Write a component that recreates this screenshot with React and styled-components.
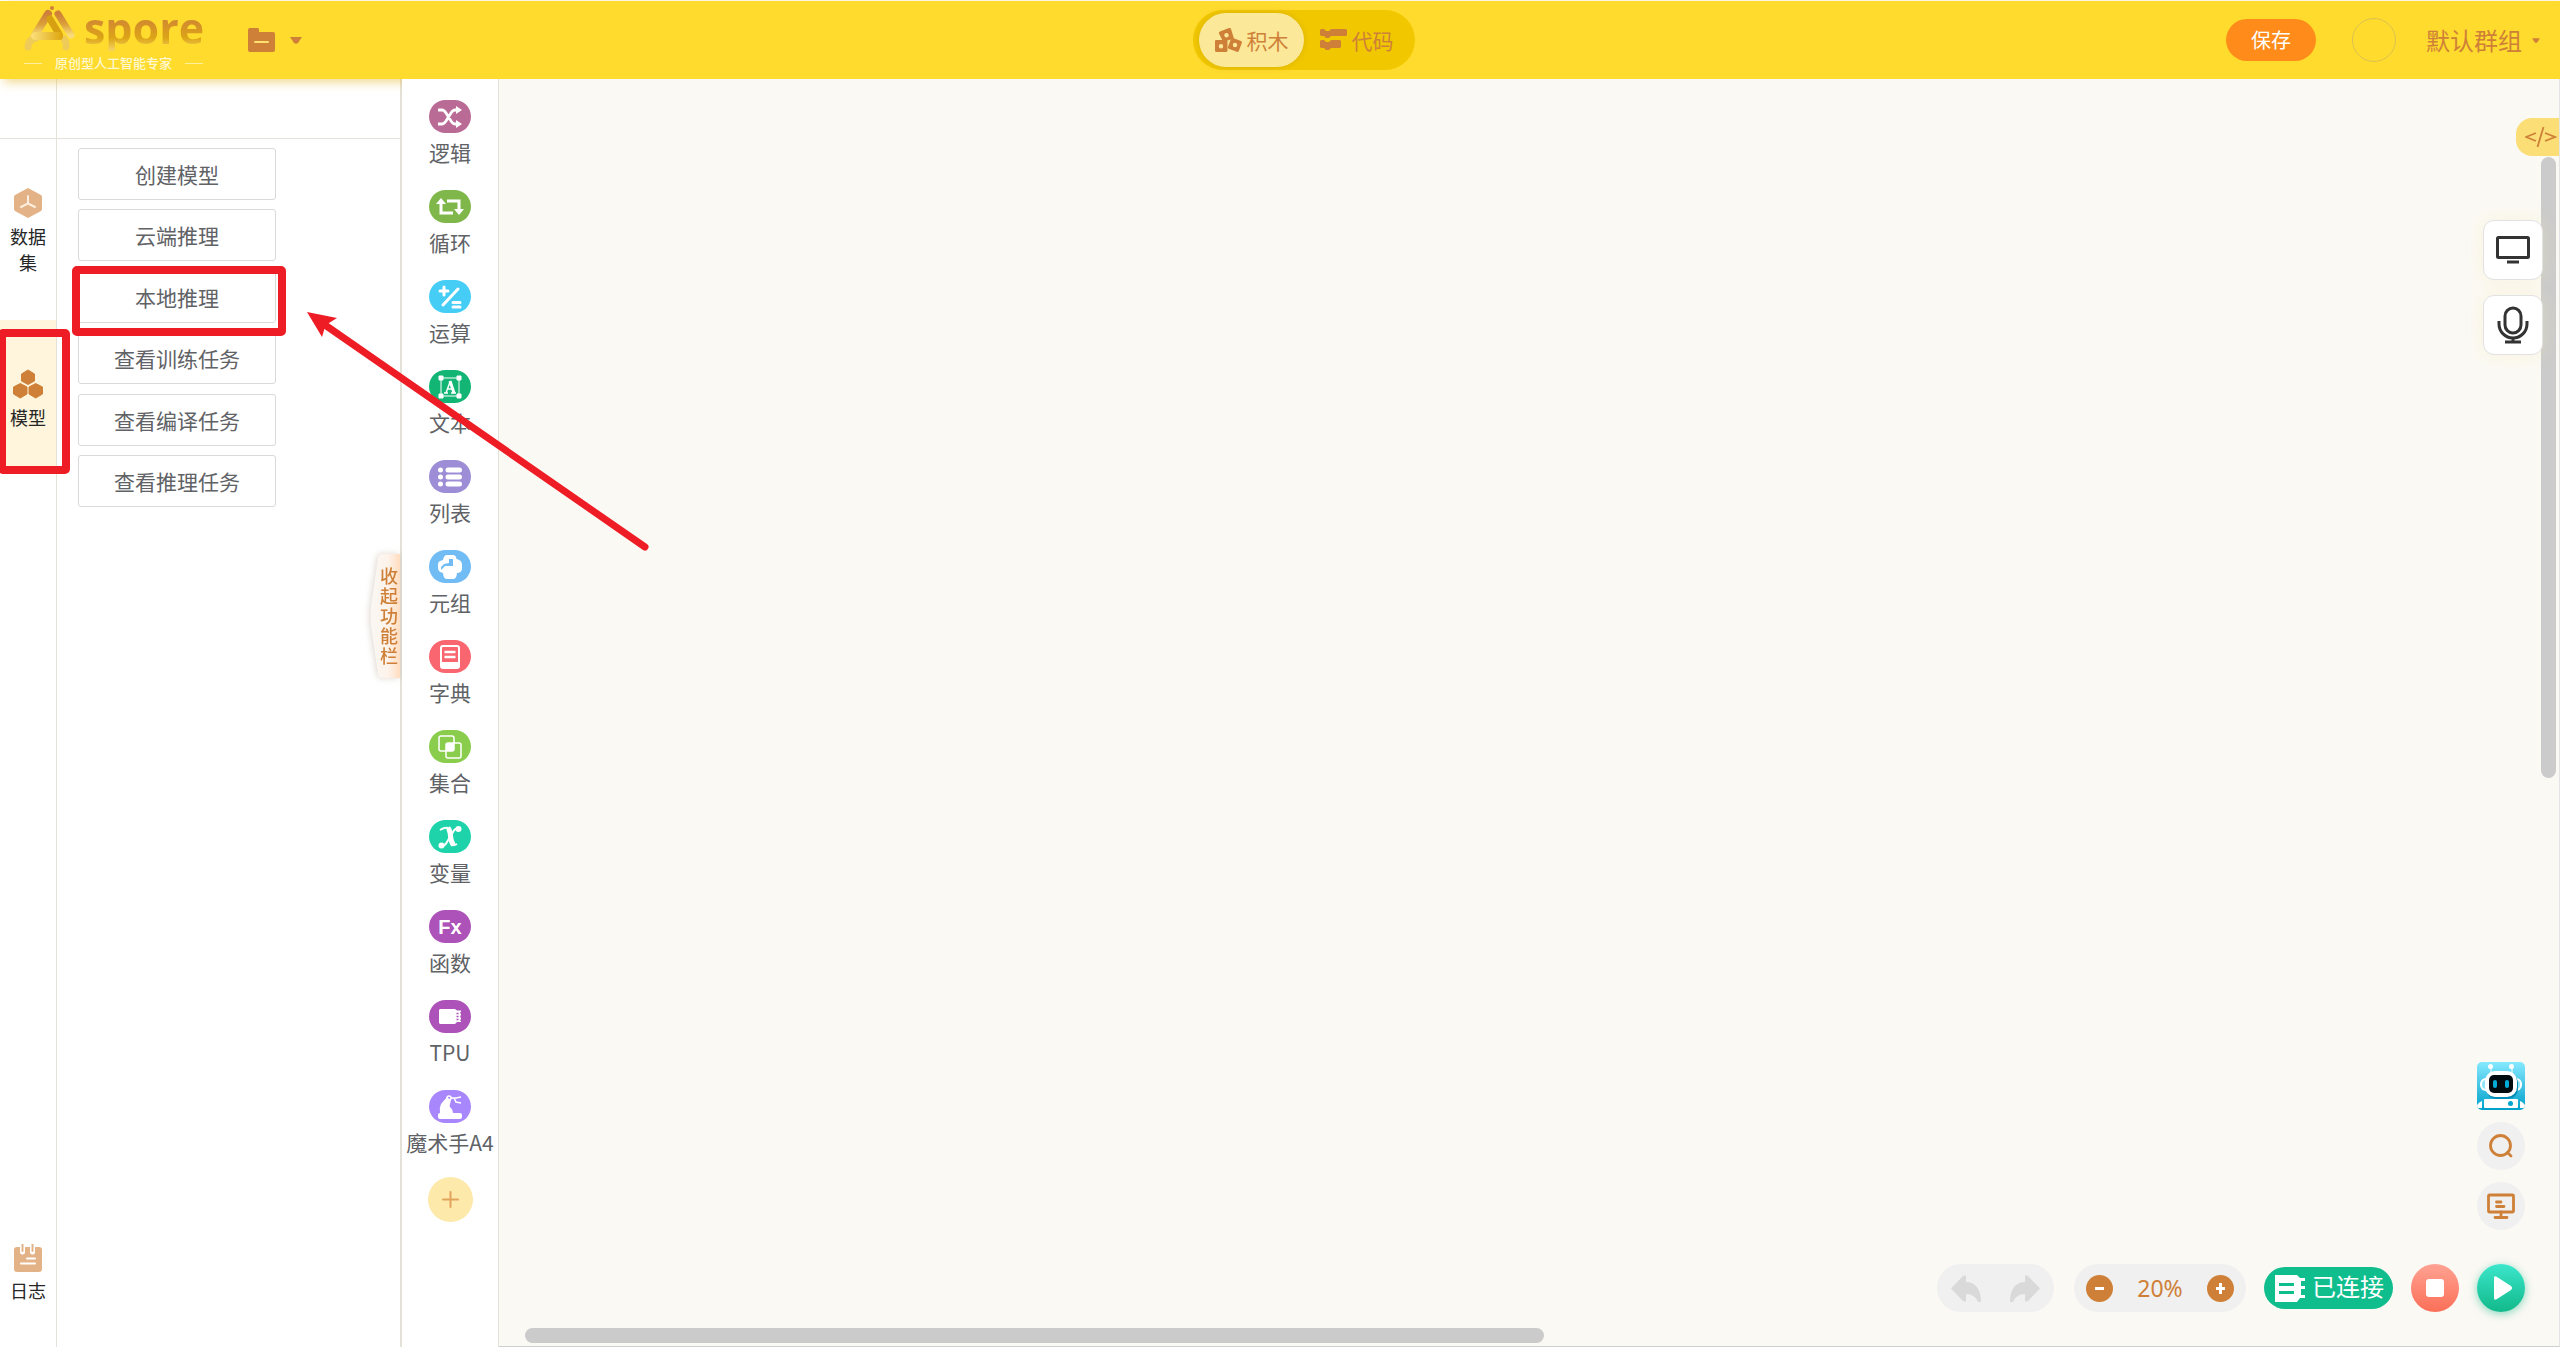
import React from 'react';
import styled, { createGlobalStyle } from 'styled-components';

const brown = '#cf8038';
const line = '#e4e1d8';

const GlobalStyle = createGlobalStyle`
  *, *::before, *::after { box-sizing: border-box; }
  body {
    margin: 0;
    overflow: hidden;
    background: #fff;
    font-family: "Noto Sans CJK SC", sans-serif;
    font-weight: 400;
  }
  button {
    margin: 0;
    padding: 0;
    border: 0;
    background: none;
    font: inherit;
    color: inherit;
    cursor: pointer;
  }
  svg { display: block; flex: none; }
`;

const Page = styled.div`
  position: relative;
  display: flex;
  flex-direction: column;
  height: 100vh;
  padding-top: 1px;
`;

/* ---------- header ---------- */

const Header = styled.header`
  position: relative;
  z-index: 1;
  flex: none;
  display: grid;
  grid-template-columns: 1fr auto 1fr;
  align-items: center;
  height: 78px;
  padding: 0 20px 0 24px;
  background: #ffdb2d;
  color: ${brown};
  box-shadow: 4px 3px 10px rgba(232, 190, 60, 0.6);
`;

const HeaderLeft = styled.div`
  display: flex;
  align-items: center;
  gap: 45px;
`;

const Logo = styled.a`
  display: block;
  width: 179px;
  text-decoration: none;
`;

const LogoTop = styled.div`
  display: flex;
  align-items: center;
  gap: 8px;
  height: 46px;
`;

const Wordmark = styled.span`
  font: 700 43px/46px "Open Sans", "Noto Sans", sans-serif;
  background: linear-gradient(#cf8038 22%, #dca516 72%, #f6d566 100%);
  background-clip: text;
  color: transparent;
`;

const Tagline = styled.div`
  display: flex;
  align-items: center;
  justify-content: space-between;
  height: 24px;
  font-size: 13px;
  font-weight: 500;
  line-height: 24px;
  color: #fff8d0;
  white-space: nowrap;

  &::before,
  &::after {
    content: "";
    width: 18px;
    height: 1px;
    background: #fff0a0;
  }
`;

const FolderButton = styled.button`
  display: flex;
  align-items: center;
  gap: 15px;
`;

const ModeSwitch = styled.div`
  display: flex;
  width: 222px;
  height: 60px;
  margin-left: 44px;
  padding: 3px 6px;
  border-radius: 30px;
  background: #f1c800;
`;

const ModeButton = styled.button`
  flex: 1;
  display: flex;
  align-items: center;
  justify-content: center;
  gap: 5px;
  border-radius: 27px;
  font-size: 21px;
  line-height: 30px;
  background: ${(p) => (p.$active ? '#fbe898' : 'transparent')};
  box-shadow: ${(p) => (p.$active ? '0 0 6px rgba(190, 150, 20, 0.45)' : 'none')};
`;

const HeaderRight = styled.div`
  display: flex;
  align-items: center;
  justify-content: flex-end;
`;

const SaveButton = styled.button`
  width: 90px;
  height: 42px;
  border-radius: 21px;
  background: #ff8c1a;
  color: #fff;
  font-size: 20px;
  line-height: 42px;
`;

const Avatar = styled.button`
  width: 44px;
  height: 44px;
  margin: 0 30px 0 36px;
  border: 1px solid #dcc050;
  border-radius: 50%;
`;

const GroupButton = styled.button`
  display: flex;
  align-items: center;
  gap: 10px;
  font-size: 24px;
  line-height: 36px;
`;

/* ---------- body ---------- */

const Body = styled.div`
  flex: 1;
  display: flex;
  min-height: 0;
`;

const Rail = styled.nav`
  flex: none;
  display: flex;
  flex-direction: column;
  width: 57px;
  border-right: 1px solid ${line};
`;

const TopCell = styled.div`
  flex: none;
  height: 60px;
  border-bottom: 1px solid ${line};
`;

const RailList = styled.div`
  flex: 1;
  display: flex;
  flex-direction: column;
  gap: 8px;
`;

const RailItem = styled.button`
  display: flex;
  flex-direction: column;
  align-items: center;
  gap: 5px;
  padding: 49px 9px 37px;
  background: ${(p) => (p.$active ? '#fff5dc' : 'transparent')};
  color: #262626;
  font-size: 18px;
  line-height: 26px;
`;

const RailFooter = styled(RailItem)`
  padding: 0 9px 44px;
`;

const Panel = styled.aside`
  position: relative;
  flex: none;
  width: 345px;
  border-right: 2px solid ${line};
`;

const TaskList = styled.div`
  display: grid;
  align-content: space-between;
  width: 198px;
  height: 359px;
  margin: 9px 0 0 21px;
`;

const TaskButton = styled.button`
  height: 52px;
  border: 1px solid #d9d9d9;
  border-radius: 3px;
  background: #fff;
  color: #606266;
  font-size: 21px;
  line-height: 50px;
`;

const CollapseButton = styled.button`
  position: absolute;
  top: 475px;
  right: 0;
  width: 30px;
  height: 124px;
  color: ${brown};
  filter: drop-shadow(-1px 0 3px rgba(120, 90, 60, 0.25));
`;

const CollapseLabel = styled.span`
  display: block;
  width: 18px;
  margin: 0 0 2px 10px;
  font-size: 18px;
  font-weight: 500;
  line-height: 20px;
  position: relative;
`;

const CollapseShape = styled.svg`
  position: absolute;
  inset: 0;
`;

const Toolbox = styled.nav`
  position: relative;
  z-index: 2;
  flex: none;
  display: flex;
  flex-direction: column;
  align-items: center;
  gap: 21px;
  width: 97px;
  padding-top: 21px;
  border-right: 1px solid ${line};
  background: #fff;
`;

const CategoryList = styled.div`
  display: flex;
  flex-direction: column;
  gap: 24px;
`;

const Category = styled.button`
  display: flex;
  flex-direction: column;
  align-items: center;
  gap: 5px;
  color: #606266;
  font-size: 21px;
  line-height: 28px;
  white-space: nowrap;
`;

const Pill = styled.span`
  display: grid;
  place-items: center;
  width: 42px;
  height: 33px;
  border-radius: 17px;
  background: ${(p) => p.$color};
  color: #fff;
`;

const Glyph = styled.span`
  font: 700 20px/24px "Liberation Sans", sans-serif;
`;

const AddButton = styled.button`
  display: grid;
  place-items: center;
  width: 45px;
  height: 45px;
  border-radius: 50%;
  background: #fde9a9;
  color: #e2a45c;
`;

/* ---------- workspace ---------- */

const Workspace = styled.main`
  position: relative;
  z-index: 2;
  flex: 1;
  display: flex;
  flex-direction: column;
  justify-content: space-between;
  min-width: 0;
  border-right: 1px solid #e4e4e4;
  border-bottom: 1px solid #cfcfcf;
  background: #fbf9f4;
`;

const ScrollThumbY = styled.div`
  position: absolute;
  top: 78px;
  right: 3px;
  width: 15px;
  height: 49%;
  border-radius: 8px;
  background: #cbcbcb;
`;

const ScrollThumbX = styled.div`
  position: absolute;
  left: 26px;
  bottom: 3px;
  width: 1019px;
  max-width: 50%;
  height: 15px;
  border-radius: 8px;
  background: #cbcbcb;
`;

const SideTools = styled.div`
  position: relative;
  display: flex;
  flex-direction: column;
  align-items: flex-end;
  padding-top: 39px;
`;

const CodeTab = styled.button`
  width: 43px;
  height: 38px;
  padding-left: 9px;
  border-radius: 16px 0 0 16px;
  background: #fbdf76;
  color: ${brown};
`;

const SquareTools = styled.div`
  display: flex;
  flex-direction: column;
  gap: 15px;
  margin: 64px 16px 0 0;
`;

const SquareButton = styled.button`
  display: grid;
  place-items: center;
  width: 60px;
  height: 60px;
  border: 1px solid #e2e2e4;
  border-radius: 11px;
  background: #fff;
  color: #333;
  box-shadow: 0 0 18px rgba(250, 235, 170, 0.3);
`;

const Dock = styled.div`
  display: flex;
  flex-direction: column;
  align-items: flex-end;
  gap: 34px;
  padding: 0 34px 34px 0;
`;

const DockColumn = styled.div`
  display: flex;
  flex-direction: column;
  gap: 12px;
`;

const DockRow = styled.div`
  display: flex;
  align-items: center;
  gap: 18px;
`;

const EditTools = styled.div`
  display: flex;
  gap: 20px;
`;

const ToolGroup = styled.div`
  display: flex;
  align-items: center;
  justify-content: space-between;
  width: ${(p) => p.$width}px;
  height: 48px;
  padding: 0 ${(p) => p.$pad}px;
  border-radius: 24px;
  background: #f0f0f0;
  color: ${brown};
`;

const ZoomValue = styled.output`
  font: 400 23px/32px "Noto Sans", sans-serif;
`;

const RoundButton = styled.button`
  display: grid;
  place-items: center;
  width: 48px;
  height: 48px;
  border-radius: 50%;
  background: ${(p) => p.$bg || '#f0f0f0'};
  color: ${(p) => p.$color || brown};
  box-shadow: ${(p) => p.$shadow || 'none'};
`;

const RobotButton = styled.button`
  width: 48px;
  height: 48px;
  border-radius: 5px;
  overflow: hidden;
`;

const StatusButton = styled.button`
  display: flex;
  align-items: center;
  gap: 7px;
  height: 42px;
  padding: 0 9px 0 11px;
  border-radius: 21px;
  background: #10bd8d;
  color: #fff;
  font-size: 24px;
  line-height: 38px;
  white-space: nowrap;
`;

const StatusText = styled.span`
  height: 42px;
`;

const Annotation = styled.svg`
  position: absolute;
  z-index: 3;
  top: 0;
  left: 0;
  pointer-events: none;
`;

/* ---------- icons ---------- */

const LogoMark = () => (
  <svg width="52" height="46" viewBox="0 0 52 46">
    <defs>
      <linearGradient id="markLeg" x1="0" y1="0" x2="0" y2="1">
        <stop offset="0" stopColor="#cf8038" />
        <stop offset="0.5" stopColor="#dba03a" />
        <stop offset="1" stopColor="#f9dc7a" />
      </linearGradient>
      <linearGradient id="markBase" x1="0" y1="0" x2="1" y2="0">
        <stop offset="0" stopColor="#fbe07c" />
        <stop offset="1" stopColor="#dda50a" />
      </linearGradient>
    </defs>
    <circle cx="28" cy="3" r="2" fill={brown} />
    <path d="M34 9 47 30" stroke="url(#markLeg)" strokeWidth="7" strokeLinecap="round" />
    <path d="M4 42q0-7 8-9M40 34q3 4 2 8" fill="none" stroke="#efcb5a" strokeWidth="7" strokeLinecap="round" />
    <path d="M24 9 11 30" stroke="url(#markLeg)" strokeWidth="8" strokeLinecap="round" />
    <path d="M26 14 35 29" stroke="#d6a012" strokeWidth="7" strokeLinecap="round" />
    <path d="M11 31h24" stroke="#e4b426" strokeWidth="8" strokeLinecap="round" />
    <rect x="7" y="27" width="32" height="8" rx="4" fill="url(#markBase)" />
  </svg>
);

const FolderIcon = () => (
  <svg width="27" height="24" viewBox="0 0 27 24">
    <path d="M2 0h8l1 1v3h14q2 0 2 2v16q0 2-2 2H2q-2 0-2-2V2q0-2 2-2z" fill={brown} />
    <rect x="6" y="13" width="15" height="2" rx="1" fill="#ffdf6e" />
  </svg>
);

const Caret = ({ width, height }) => (
  <svg width={width} height={height} viewBox="0 0 12 7">
    <path d="M0 0h12L8 6q-2 1.500-4 0z" fill={brown} />
  </svg>
);

const BlocksIcon = () => (
  <svg width="27" height="24" viewBox="0 0 27 24">
    <g fill={brown}>
      <path fillRule="evenodd" d="M5 3.500 14 0q1.500-.5 2 1l2.500 8q.5 1.500-1 2l-8 2.500q-1.500.5-2-1L4 5.500q-.5-1.500 1-2zM11 5a2.200 2.200 0 1 0 1 4.300A2.200 2.200 0 0 0 11 5z" />
      <path fillRule="evenodd" d="M1 12h10q1.500 0 1.500 1.500v9q0 1.500-1.500 1.500H1.500Q0 24 0 22.500V13q0-1 1-1zm5 4a2.200 2.200 0 1 0 .01 4.400A2.200 2.200 0 0 0 6 16z" />
      <path fillRule="evenodd" d="m18 10 8 3q1.300.7.8 2l-3 8q-.7 1.300-2 .8l-8-3q-1.300-.7-.8-2l3-8q.7-1.300 2-.8zm2 4.800a2.200 2.200 0 1 0 .01 4.400 2.200 2.200 0 0 0-.01-4.400z" />
    </g>
  </svg>
);

const CodeBlocksIcon = () => (
  <svg width="27" height="22" viewBox="0 0 27 22">
    <g fill={brown}>
      <path d="M1 0h3l2 2h3l2-2h15l1 1v5l-1 1H11L9 9H6L4 7H1L0 6V1z" />
      <path d="M1 11h3l2 2h3l2-2h9l1 1v6l-1 1h-9l-2 2H6l-2-2H1l-1-1v-6z" />
    </g>
  </svg>
);

const DatasetIcon = () => (
  <svg width="28" height="30" viewBox="0 0 28 30">
    <path d="M14 0 27 7q1 1 1 2v12q0 1-1 2l-13 7L1 23q-1-1-1-2V9q0-1 1-2z" fill="#e3b387" />
    <path d="M14 8v7.500L7 19m7-3.500 7 3.500" fill="none" stroke="#fbeede" strokeWidth="2" strokeLinecap="round" />
  </svg>
);

const ModelIcon = () => (
  <svg width="30" height="30" viewBox="0 0 30 30">
    <g fill={brown} stroke={brown} strokeWidth="1" strokeLinejoin="round">
      <path d="M15 1 21.500 5v7L15 15.500 8.500 12V5z" />
      <path d="M7.300 14.500 14 18v7l-6.700 4L.5 25v-7z" />
      <path d="M22.700 14.500 29.500 18v7l-6.800 4L16 25v-7z" />
    </g>
  </svg>
);

const LogIcon = () => (
  <svg width="28" height="28" viewBox="0 0 28 28">
    <rect y="3" width="28" height="25" rx="3" fill="#e3b387" />
    <path d="M8.500 1v7M18.500 1v7" stroke="#fff" strokeWidth="5" strokeLinecap="round" />
    <path d="M13 14.500h8M7 19.500h14" stroke="#fff" strokeWidth="2" strokeLinecap="round" />
    <path d="M8.500 0v7M18.500 0v7" stroke="#e3b387" strokeWidth="2" strokeLinecap="round" />
  </svg>
);

const Icon = ({ children, size = 24 }) => (
  <svg width={size} height={size} viewBox="0 0 24 24" fill="none" stroke="currentColor" strokeWidth="3">
    {children}
  </svg>
);

const icons = {
  logic: (
    <Icon>
      <path d="M0 5h4q2 0 4 3l5 8q2 3 4 3h2M0 19h4q2 0 4-3l5-8q2-3 4-3h2" strokeWidth="2.800" />
      <path d="m18 1 6 4-6 4zM18 15l6 4-6 4z" fill="currentColor" stroke="none" />
    </Icon>
  ),
  loop: (
    <svg width="28" height="18" viewBox="0 0 28 18">
      <path d="M5 5v10h12M11 3h12v9" fill="none" stroke="#fff" strokeWidth="3" />
      <path d="M5 0l5 6H0zM23 17l-5-6h10z" fill="#fff" />
    </svg>
  ),
  math: (
    <Icon>
      <path d="M2 6h8M6 2v8M20 4 5 20M15 17.500h7M15 22h7" strokeWidth="3" strokeLinecap="round" />
    </Icon>
  ),
  text: (
    <Icon>
      <path d="M4 3h16M4 21h16M3 4v16M21 4v16" strokeWidth="1" />
      <path d="M1 1h4v4H1zM19 1h4v4h-4zM1 19h4v4H1zM19 19h4v4h-4z" fill="currentColor" strokeWidth="1" />
      <path d="m8 18 4-11" strokeWidth="1.500" />
      <path d="m12 6 4 12" strokeWidth="3" />
      <path d="M9 14h6M6 18h4M13 18h5" strokeWidth="1.500" />
    </Icon>
  ),
  list: (
    <Icon>
      <path d="M2.500 5h0M2.500 12h0M2.500 19h0M10 5h11.500M10 12h11.500M10 19h11.500" strokeWidth="5" strokeLinecap="round" />
    </Icon>
  ),
  tuple: (
    <Icon>
      <path fillRule="evenodd" fill="currentColor" stroke="none" d="M9 0h6q3 0 3.500 4 5 1 5.500 5v5q-.5 4-5 4-.5 6-4 6H9q-3.500 0-4-6-5-1-5-5V9q0-3 5-4Q6 0 9 0zm2 4v4l-5 1-3 3v3l4-4h8V4z" />
    </Icon>
  ),
  dict: (
    <Icon>
      <rect x="3" y="1" width="18" height="22" rx="2" strokeWidth="2" />
      <path d="M3 17h18v6H3z" fill="currentColor" stroke="none" />
      <path d="M6.500 7h11M6.500 12h11" strokeWidth="2.500" />
    </Icon>
  ),
  set: (
    <Icon>
      <rect x="1" y="1" width="15" height="15" rx="2" strokeWidth="1.500" />
      <rect x="8" y="8" width="15" height="15" rx="2" strokeWidth="1.500" />
      <path d="M8 8h8v8H8z" fill="currentColor" stroke="none" />
    </Icon>
  ),
  variable: (
    <Icon>
      <path d="M2 5q5-3 8-2l3 15q1 4 6 1" strokeWidth="2" />
      <path d="M10 3q2 2 2.500 8t3 9" strokeWidth="5" />
      <path d="M21 3q-4 0-6 4l-6 10q-2 4-6 4" strokeWidth="2" />
      <circle cx="20.500" cy="4" r="3" fill="currentColor" stroke="none" />
      <circle cx="3.500" cy="20.500" r="3" fill="currentColor" stroke="none" />
    </Icon>
  ),
  fn: <Glyph>Fx</Glyph>,
  tpu: (
    <svg width="22" height="15" viewBox="0 0 22 15">
      <path d="M1 0h15l2 1.500h4V13h-4l-2 2H1l-1-1V1z" fill="#fff" />
      <path d="M17.500 4.500h2M17.500 7.500h2M17.500 10.500h2M22 3v1.500M22 6.500v2M22 10.500V12" stroke="#ac52b8" strokeWidth="1.500" />
    </svg>
  ),
  arm: (
    <Icon>
      <path d="M0 20q0-2 2-2-1-5 1-9l6-7 4 3-1 4q-1 3 1 4 2 2 2 5h7q2 0 2 2v2q0 2-2 2H2q-2 0-2-2z" fill="currentColor" stroke="none" />
      <circle cx="11" cy="3" r="2" strokeWidth="1.500" />
      <path d="M13 3h5l5-1M16 3l2 4 5 1" strokeWidth="1.500" />
    </Icon>
  ),
};

const UndoIcon = ({ flip }) => (
  <svg width="30" height="27" viewBox="0 0 30 27">
    <path
      transform={flip ? 'matrix(-1 0 0 1 30 0)' : undefined}
      d="M0 13.500 12 1q3-2 3 1v5c10 0 15 8 15 20h-3c-2-5-6-8-12-8v6q0 3-3 1z"
      fill="#d9d9d9"
    />
  </svg>
);

const SignIcon = ({ plus }) => (
  <svg width="27" height="27" viewBox="0 0 27 27">
    <circle cx="13.500" cy="13.500" r="13.500" fill={brown} />
    <path d={plus ? 'M9 13.500h9M13.500 8v11' : 'M9 13.500h9'} stroke="#fff" strokeWidth="3" />
  </svg>
);

const RobotIcon = () => (
  <svg width="48" height="48" viewBox="0 0 48 48">
    <defs>
      <linearGradient id="robotBg" x1="0" y1="0" x2="0" y2="1">
        <stop offset="0" stopColor="#86e9ff" />
        <stop offset="1" stopColor="#00a0cb" />
      </linearGradient>
    </defs>
    <rect width="48" height="48" fill="url(#robotBg)" />
    <path d="M14 5v7M35 5v7" stroke="#fff" strokeWidth="1" />
    <circle cx="13.500" cy="4.500" r="2.500" fill="#fff" />
    <circle cx="34.500" cy="4.500" r="2.500" fill="#fff" />
    <rect x="3" y="16" width="42" height="13" rx="6" fill="#fff" />
    <rect x="5" y="18" width="38" height="9" rx="4" fill="#90e6fa" />
    <rect x="9" y="11" width="32" height="26" rx="10" fill="#008cb5" />
    <rect x="8" y="9" width="32" height="26" rx="10" fill="#fff" />
    <rect x="12" y="13" width="24" height="18" rx="5" fill="#020b10" />
    <rect x="16" y="18" width="4" height="8" rx="2" fill="#00add8" />
    <rect x="28" y="18" width="4" height="8" rx="2" fill="#00add8" />
    <rect x="7" y="37" width="34" height="9" rx="1" fill="#fff" />
    <path d="M0 46v-3q2-3 5-4v7zM48 46v-3q-2-3-5-4v7z" fill="#fff" />
    <circle cx="33.500" cy="41.500" r="2.500" fill="#00a5cf" />
  </svg>
);

const ChipIcon = () => (
  <svg width="30" height="27" viewBox="0 0 30 27">
    <path fillRule="evenodd" fill="#fff" d="M0 0h22l3 3h5v3h-4v5h4v3h-4v6h4v3h-5l-3 4H0zM4 8v3h15V8zM4 16v3h15v-3z" />
  </svg>
);

const categories = [
  ['逻辑', '#b96a95', 'logic'],
  ['循环', '#80b74b', 'loop'],
  ['运算', '#45cdf6', 'math'],
  ['文本', '#13b574', 'text'],
  ['列表', '#9c8dd6', 'list'],
  ['元组', '#72bcf5', 'tuple'],
  ['字典', '#f96670', 'dict'],
  ['集合', '#8acc4c', 'set'],
  ['变量', '#1ed3aa', 'variable'],
  ['函数', '#ac52b8', 'fn'],
  ['TPU', '#ac52b8', 'tpu'],
  ['魔术手A4', '#a886fb', 'arm'],
];

const tasks = ['创建模型', '云端推理', '本地推理', '查看训练任务', '查看编译任务', '查看推理任务'];

export default function App() {
  return (
    <>
      <GlobalStyle />
      <Page>
        <Header>
          <HeaderLeft>
            <Logo href="#">
              <LogoTop>
                <LogoMark />
                <Wordmark>spore</Wordmark>
              </LogoTop>
              <Tagline>原创型人工智能专家</Tagline>
            </Logo>
            <FolderButton aria-label="文件">
              <FolderIcon />
              <Caret width={12} height={7} />
            </FolderButton>
          </HeaderLeft>
          <ModeSwitch>
            <ModeButton $active><BlocksIcon />积木</ModeButton>
            <ModeButton><CodeBlocksIcon />代码</ModeButton>
          </ModeSwitch>
          <HeaderRight>
            <SaveButton>保存</SaveButton>
            <Avatar aria-label="用户" />
            <GroupButton>默认群组<Caret width={8} height={5} /></GroupButton>
          </HeaderRight>
        </Header>

        <Body>
          <Rail>
            <TopCell />
            <RailList>
              <RailItem><DatasetIcon />数据集</RailItem>
              <RailItem $active><ModelIcon />模型</RailItem>
            </RailList>
            <RailFooter><LogIcon />日志</RailFooter>
          </Rail>

          <Panel>
            <TopCell />
            <TaskList>
              {tasks.map((task) => <TaskButton key={task}>{task}</TaskButton>)}
            </TaskList>
            <CollapseButton>
              <CollapseShape width="30" height="124" viewBox="0 0 30 124">
                <defs>
                  <linearGradient id="tabFill">
                    <stop offset="0" stopColor="#faf7f3" />
                    <stop offset="0.6" stopColor="#fdf3ea" />
                    <stop offset="1" stopColor="#ffddc0" />
                  </linearGradient>
                </defs>
                <path d="M30 0H12Q9 0 8 4L2 45Q-1 62 2 79l6 41q1 4 4 4h18z" fill="url(#tabFill)" />
              </CollapseShape>
              <CollapseLabel>收起功能栏</CollapseLabel>
            </CollapseButton>
          </Panel>

          <Toolbox>
            <CategoryList>
              {categories.map(([label, color, icon]) => (
                <Category key={label}>
                  <Pill $color={color}>{icons[icon]}</Pill>
                  {label}
                </Category>
              ))}
            </CategoryList>
            <AddButton aria-label="添加">
              <svg width="17" height="17" viewBox="0 0 17 17" stroke="currentColor" strokeWidth="2" strokeLinecap="round">
                <path d="M8.500 1v15M1 8.500h15" />
              </svg>
            </AddButton>
          </Toolbox>

          <Workspace>
            <ScrollThumbY />
            <ScrollThumbX />
            <SideTools>
              <CodeTab aria-label="代码">
                <svg width="32" height="22" viewBox="0 0 32 22" fill="none" stroke="currentColor" strokeWidth="1.800">
                  <path d="M11 7 1 11 11 15M18.500 1l-6 20M20 7l10 4L20 15" />
                </svg>
              </CodeTab>
              <SquareTools>
                <SquareButton aria-label="屏幕">
                  <svg width="34" height="28" viewBox="0 0 34 28" fill="none" stroke="currentColor" strokeWidth="3">
                    <rect x="1.500" y="1.500" width="31" height="20" rx="1" />
                    <path d="M11 26h12" />
                  </svg>
                </SquareButton>
                <SquareButton aria-label="语音">
                  <svg width="32" height="38" viewBox="0 0 32 38" fill="none" stroke="currentColor" strokeWidth="3">
                    <rect x="8" y="2" width="16" height="25" rx="8" />
                    <path d="M2 15v3a14 14 0 0 0 28 0v-3M16 32v4M8 36h16" />
                  </svg>
                </SquareButton>
              </SquareTools>
            </SideTools>

            <Dock>
              <DockColumn>
                <RobotButton aria-label="助手"><RobotIcon /></RobotButton>
                <RoundButton aria-label="搜索">
                  <svg width="24" height="24" viewBox="0 0 24 24" fill="none" stroke="currentColor" strokeWidth="2.800" strokeLinecap="round">
                    <circle cx="11.500" cy="11.500" r="10" />
                    <path d="m18.500 18.500 3.500 3.500" />
                  </svg>
                </RoundButton>
                <RoundButton aria-label="控制台">
                  <svg width="28" height="26" viewBox="0 0 28 26" fill="none" stroke="currentColor" strokeWidth="2.800" strokeLinecap="round">
                    <rect x="1.500" y="2" width="25" height="17" rx="1" />
                    <path d="M14 19v4M8 24.500h12M9.500 9h4.500M9.500 13.500h7.500" />
                  </svg>
                </RoundButton>
              </DockColumn>
              <DockRow>
                <EditTools>
                  <ToolGroup $width={117} $pad={14}>
                    <button aria-label="撤销"><UndoIcon /></button>
                    <button aria-label="重做"><UndoIcon flip /></button>
                  </ToolGroup>
                  <ToolGroup $width={172} $pad={12}>
                    <button aria-label="缩小"><SignIcon /></button>
                    <ZoomValue>20%</ZoomValue>
                    <button aria-label="放大"><SignIcon plus /></button>
                  </ToolGroup>
                </EditTools>
                <StatusButton><ChipIcon /><StatusText>已连接</StatusText></StatusButton>
                <RoundButton aria-label="停止" $bg="linear-gradient(#ffa292, #fb6f58)" $color="#fff">
                  <svg width="18" height="18" viewBox="0 0 18 18"><rect width="18" height="18" rx="3" fill="currentColor" /></svg>
                </RoundButton>
                <RoundButton
                  aria-label="运行"
                  $bg="linear-gradient(#3be6cb, #12b98a)"
                  $color="#fff"
                  $shadow="0 2px 8px rgba(18, 185, 138, 0.5)"
                >
                  <svg width="24" height="24" viewBox="0 0 24 24"><path d="M5 2q0-3 3-1l14 9q2 2 0 4L8 23q-3 2-3-1z" fill="currentColor" /></svg>
                </RoundButton>
              </DockRow>
            </Dock>
          </Workspace>
        </Body>

        <Annotation width="660" height="560" viewBox="0 0 660 560" fill="none" stroke="#ee1c25">
          <rect x="76" y="270" width="206" height="62" rx="1" strokeWidth="8" />
          <rect x="2" y="333" width="64" height="137" rx="1" strokeWidth="8" />
          <path d="M325 325 645 547" strokeWidth="7" strokeLinecap="round" />
          <path d="m307 312 30 6-8 5-4 4-3 10z" fill="#ee1c25" stroke="none" />
        </Annotation>
      </Page>
    </>
  );
}
